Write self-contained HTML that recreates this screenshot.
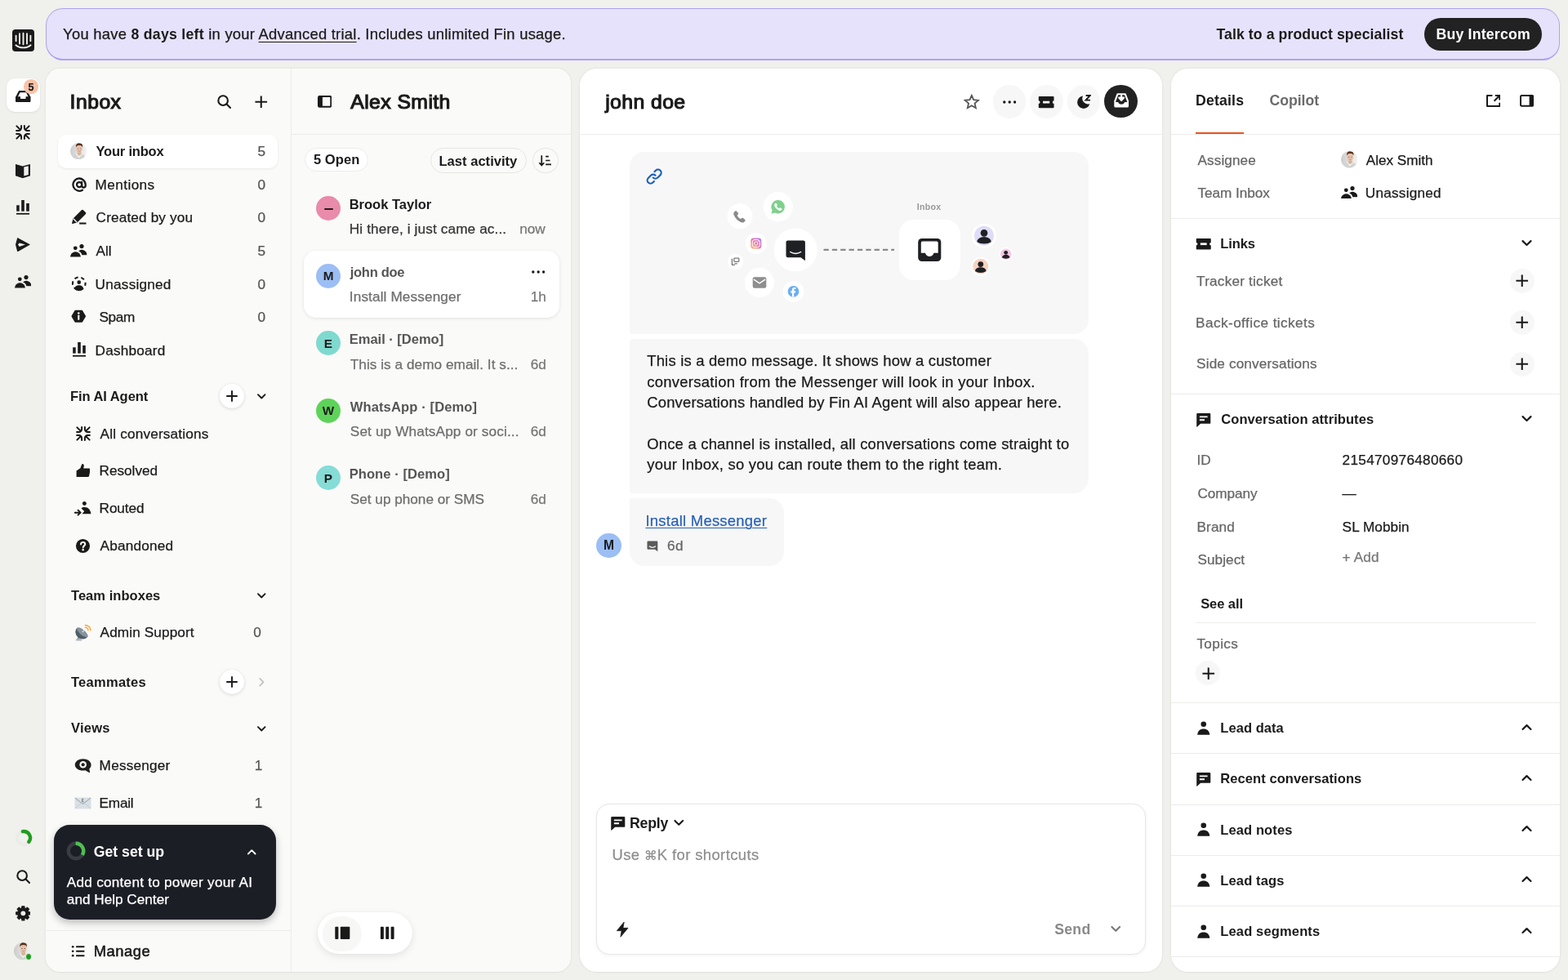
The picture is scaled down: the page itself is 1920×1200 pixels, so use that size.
<!DOCTYPE html>
<html lang="en">
<head>
<meta charset="utf-8">
<title>Inbox | Intercom</title>
<style>
html,body{margin:0;padding:0}
body{width:1920px;height:1200px;overflow:hidden;background:#f0f0ec;font-family:"Liberation Sans",sans-serif;position:relative;will-change:transform}
body>div,body>svg{position:absolute}
.t{white-space:nowrap;-webkit-text-stroke:.25px currentColor}
.t b{font-weight:700;font-size:17.700px;-webkit-text-stroke:0}
.t u{text-underline-offset:2.500px;text-decoration-thickness:1.200px}
</style>
</head>
<body>
<svg style="left:14.55px;top:35.7px;" width="27" height="27" viewBox="0 0 27 27"><rect x="0" y="0" width="27" height="27" rx="4" fill="#1a1a1a"/><path d="M4.6 7.6v6.6M9 5.3v12.2M13.5 4.8v13.4M18 5.3v12.2M22.4 7.6v6.6" stroke="#f0f0ec" stroke-width="1.9" stroke-linecap="round"/><path d="M4.4 19.3c2.4 2.1 5.6 3.1 9.1 3.1s6.7-1 9.1-3.1" fill="none" stroke="#f0f0ec" stroke-width="1.9" stroke-linecap="round"/></svg>
<div style="left:7.6px;top:96.3px;width:41px;height:41px;background:#fff;border-radius:10.5px;box-shadow:0 1px 3px rgba(0,0,0,.08)"></div>
<svg style="left:19px;top:110.55px;" width="18.5" height="14.2" viewBox="0 0 18.5 14.2"><path d="M0 7.2h6v2.7h6.5V7.2h6v5.5a1.5 1.5 0 0 1-1.5 1.5H1.5A1.5 1.5 0 0 1 0 12.7z" fill="#1a1a1a"/><path d="M1.2 8.2L4.7 1.2h9.1l3.5 7" fill="none" stroke="#1a1a1a" stroke-width="2.3" stroke-linejoin="round"/></svg>
<div style="left:29.4px;top:97.4px;width:17.2px;height:17.2px;background:#f9c3a8;border-radius:50%;"></div>
<div id="t1" class="t" style="left:34.5px;top:98px;font-size:12.5px;line-height:18px;font-weight:700;color:#1a1a1a;">5</div>
<svg style="left:19.05px;top:153.4px;" width="18" height="18" viewBox="0 0 18 18"><path d="M7.1 1.1V3.6A3.5 3.5 0 0 1 3.6 7.1H1.1M1.4 1.4L5.8 5.8M7.1 16.9V14.4A3.5 3.5 0 0 0 3.6 10.9H1.1M1.4 16.6L5.8 12.2M10.9 1.1V3.6A3.5 3.5 0 0 0 14.4 7.1H16.9M16.6 1.4L12.2 5.8M10.9 16.9V14.4A3.5 3.5 0 0 1 14.4 10.9H16.9M16.6 16.6L12.2 12.2" stroke="#1a1a1a" stroke-width="2" stroke-linecap="round" stroke-linejoin="round" fill="none"/></svg>
<svg style="left:19.05px;top:200.55px;" width="18" height="17.2" viewBox="0 0 18 17.2"><path d="M0 0l8.8 2.4 9.2-2.4v14.3l-9.2 2.9L0 14.3z" fill="#1a1a1a"/><path d="M10.3 3.6l5.5-1.4v10.7l-5.5 1.7z" fill="#f0f0ec"/></svg>
<svg style="left:20px;top:245px;" width="16" height="17.7" viewBox="0 0 16 17.7"><rect x=".2" y="6.3" width="3.5" height="7.4" fill="#1a1a1a"/><rect x="6.2" y="0" width="3.6" height="13.7" fill="#1a1a1a"/><rect x="12.2" y="4" width="3.6" height="9.7" fill="#1a1a1a"/><rect x="0" y="15.9" width="16" height="1.8" fill="#1a1a1a"/></svg>
<svg style="left:18.95px;top:290.75px;" width="18" height="17.6" viewBox="0 0 18 17.6"><path d="M2.3.100L18 8.6 2.3 17.5 0 8.6zM3 8.6l1.7 2.3 7.3-2.3-7.3-2.2z" fill="#1a1a1a" fill-rule="evenodd"/></svg>
<svg style="left:17.75px;top:337.3px;" width="20.5" height="15.6" viewBox="0 0 20.5 15.6"><circle cx="6.3" cy="4.8" r="2.4" fill="#1a1a1a"/><path d="M0 15.6a6.45 6.3 0 0 1 12.9 0z" fill="#1a1a1a"/><circle cx="14" cy="2.6" r="2.6" fill="#1a1a1a"/><path d="M14.4 13.2h6a6.2 6.2 0 0 0-10.3-4.7c2.3.8 3.9 2.5 4.3 4.7z" fill="#1a1a1a"/></svg>
<svg style="left:16.5px;top:1013.5px;" width="24" height="24" viewBox="0 0 24 24"><circle cx="12" cy="12" r="8" fill="none" stroke="#ebebe7" stroke-width="4"/><path d="M10.89 4.08A8 8 0 0 1 18.3 16.93" fill="none" stroke="#1f9d1f" stroke-width="4.3" stroke-linecap="round"/></svg>
<svg style="left:18.5px;top:1064.1px;" width="18.6" height="18.6" viewBox="0 0 16 16"><circle cx="7" cy="7" r="5" fill="none" stroke="#1a1a1a" stroke-width="1.8"/><path d="M10.8 10.8L14.6 14.6" stroke="#1a1a1a" stroke-width="1.8" stroke-linecap="round"/></svg>
<svg style="left:18.55px;top:1109.45px;" width="18.7" height="18.7" viewBox="0 0 16 16"><path d="M6.73 0.71L9.27 0.71L9.31 2.55L10.93 3.23L12.26 1.95L14.05 3.74L12.77 5.07L13.45 6.69L15.29 6.73L15.29 9.27L13.45 9.31L12.77 10.93L14.05 12.26L12.26 14.05L10.93 12.77L9.31 13.45L9.27 15.29L6.73 15.29L6.69 13.45L5.07 12.77L3.74 14.05L1.95 12.26L3.23 10.93L2.55 9.31L0.71 9.27L0.71 6.73L2.55 6.69L3.23 5.07L1.95 3.74L3.74 1.95L5.07 3.23L6.69 2.55z" fill="#1a1a1a" stroke="#1a1a1a" stroke-width="1.2" stroke-linejoin="round"/><circle cx="8" cy="8" r="2.5" fill="#f0f0ec"/></svg>
<svg style="left:17.4px;top:1153.7px" width="21.2" height="21.2" viewBox="0 0 21 21"><defs><clipPath id="avc1"><circle cx="10.5" cy="10.5" r="10.5"/></clipPath><linearGradient id="avg1" x1="0" y1="0" x2="1" y2="0"><stop offset="0" stop-color="#cbcbcb"/><stop offset=".55" stop-color="#e4e4e4"/><stop offset="1" stop-color="#f1f1f1"/></linearGradient><filter id="avf1" x="-20%" y="-20%" width="140%" height="140%"><feGaussianBlur stdDeviation=".45"/></filter></defs><circle cx="10.5" cy="10.5" r="10.5" fill="url(#avg1)"/><g clip-path="url(#avc1)"><g filter="url(#avf1)"><ellipse cx="10.6" cy="20.6" rx="9.8" ry="7.2" fill="#d2d3d3"/><path d="M7.6 13.8l3.6 4.2 3.4-3.8" fill="none" stroke="#efefe8" stroke-width="1.5"/><rect x="9.3" y="10.5" width="4.6" height="5" rx="1.6" fill="#d9b198"/><ellipse cx="11.5" cy="7.6" rx="4" ry="4.9" fill="#e6c2ac"/><path d="M7.3 5.6c-.5-3.6 1.4-5.3 4.3-5.3s4.7 1.7 4.1 5.3c-.9-2-2.2-2.6-4.2-2.6s-3.3.6-4.2 2.6z" fill="#5a321c"/><ellipse cx="9.9" cy="7.4" rx=".7" ry=".5" fill="#70483a"/><ellipse cx="13.1" cy="7.4" rx=".7" ry=".5" fill="#70483a"/><path d="M10 10.3c1 .6 2.1.6 3.1 0" fill="none" stroke="#b5826f" stroke-width=".7"/></g></g></svg>
<div style="left:30.7px;top:1167px;width:8.6px;height:8.6px;background:#1f9d1f;border-radius:50%;border:1.5px solid #f0f0ec;box-sizing:border-box"></div>
<div style="left:55.8px;top:9.7px;width:1854.3px;height:64.5px;background:#e7e2fb;border-radius:21px;border:solid #aca3ef;border-width:1.3px 1.6px 2px 1.6px;box-sizing:border-box"></div>
<div id="t2" class="t" style="left:77.1px;top:30px;font-size:18.4px;line-height:24px;font-weight:400;color:#1a1a1a;letter-spacing:0.254px;">You have <b>8 days left</b> in your <u>Advanced trial</u>. Includes unlimited Fin usage.</div>
<div id="t3" class="t" style="left:1489.4px;top:30px;font-size:17.7px;line-height:24px;font-weight:700;color:#1a1a1a;letter-spacing:0.081px;-webkit-text-stroke:0;">Talk to a product specialist</div>
<div style="left:1744px;top:21.7px;width:144.4px;height:40.6px;background:#222;border-radius:21px;"></div>
<div id="t4" class="t" style="left:1758.45px;top:30px;font-size:17.7px;line-height:24px;font-weight:700;color:#fff;letter-spacing:0.2px;-webkit-text-stroke:0;">Buy Intercom</div>
<div style="left:56.2px;top:84px;width:643.3px;height:1106px;background:#fafaf8;border-radius:17.5px;box-shadow:0 0 3px rgba(0,0,0,.09),0 1px 2px rgba(0,0,0,.03)"></div>
<div style="left:710.3px;top:84px;width:713.2px;height:1106px;background:#fff;border-radius:20.5px;box-shadow:0 0 3px rgba(0,0,0,.09),0 1px 2px rgba(0,0,0,.03)"></div>
<div style="left:1434px;top:84px;width:476px;height:1106px;background:#fff;border-radius:20.5px;box-shadow:0 0 3px rgba(0,0,0,.09),0 1px 2px rgba(0,0,0,.03);overflow:hidden"></div>
<div style="left:355.7px;top:84px;width:1px;height:1106px;background:#ececea"></div>
<div style="left:356px;top:164px;width:343.5px;height:1px;background:#ececea"></div>
<div id="t5" class="t" style="left:85.58px;top:109px;font-size:24.77px;line-height:32px;font-weight:400;color:#1a1a1a;letter-spacing:0.46px;-webkit-text-stroke:1.16px #1a1a1a;">Inbox</div>
<svg style="left:265px;top:115px;" width="18.6" height="18.6" viewBox="0 0 16 16"><circle cx="7" cy="7" r="5" fill="none" stroke="#1a1a1a" stroke-width="1.8"/><path d="M10.8 10.8L14.6 14.6" stroke="#1a1a1a" stroke-width="1.8" stroke-linecap="round"/></svg>
<svg style="left:310.25px;top:114.75px;" width="19.5" height="19.5" viewBox="0 0 16 16"><path d="M8 2v12M2 8h12" stroke="#1a1a1a" stroke-width="1.7" stroke-linecap="butt"/></svg>
<div style="left:70.8px;top:164.6px;width:269.6px;height:41.1px;background:#fff;border-radius:10px;box-shadow:0 1px 3px rgba(0,0,0,.08)"></div>
<svg style="left:86px;top:175.3px" width="20.2" height="20.2" viewBox="0 0 21 21"><defs><clipPath id="avc2"><circle cx="10.5" cy="10.5" r="10.5"/></clipPath><linearGradient id="avg2" x1="0" y1="0" x2="1" y2="0"><stop offset="0" stop-color="#cbcbcb"/><stop offset=".55" stop-color="#e4e4e4"/><stop offset="1" stop-color="#f1f1f1"/></linearGradient><filter id="avf2" x="-20%" y="-20%" width="140%" height="140%"><feGaussianBlur stdDeviation=".45"/></filter></defs><circle cx="10.5" cy="10.5" r="10.5" fill="url(#avg2)"/><g clip-path="url(#avc2)"><g filter="url(#avf2)"><ellipse cx="10.6" cy="20.6" rx="9.8" ry="7.2" fill="#d2d3d3"/><path d="M7.6 13.8l3.6 4.2 3.4-3.8" fill="none" stroke="#efefe8" stroke-width="1.5"/><rect x="9.3" y="10.5" width="4.6" height="5" rx="1.6" fill="#d9b198"/><ellipse cx="11.5" cy="7.6" rx="4" ry="4.9" fill="#e6c2ac"/><path d="M7.3 5.6c-.5-3.6 1.4-5.3 4.3-5.3s4.7 1.7 4.1 5.3c-.9-2-2.2-2.6-4.2-2.6s-3.3.6-4.2 2.6z" fill="#5a321c"/><ellipse cx="9.9" cy="7.4" rx=".7" ry=".5" fill="#70483a"/><ellipse cx="13.1" cy="7.4" rx=".7" ry=".5" fill="#70483a"/><path d="M10 10.3c1 .6 2.1.6 3.1 0" fill="none" stroke="#b5826f" stroke-width=".7"/></g></g></svg>
<div id="t6" class="t" style="left:117.5px;top:174px;font-size:16.55px;line-height:24px;font-weight:700;color:#1a1a1a;letter-spacing:-0.212px;-webkit-text-stroke:0;">Your inbox</div>
<div id="t7" class="t" style="left:315.5px;top:173px;font-size:17.2px;line-height:24px;font-weight:400;color:#555;">5</div>
<div id="t8" class="t" style="left:116.62px;top:214px;font-size:17.2px;line-height:24px;font-weight:400;color:#1a1a1a;letter-spacing:0.4px;">Mentions</div>
<div id="t9" class="t" style="left:315.5px;top:214px;font-size:17.2px;line-height:24px;font-weight:400;color:#555;">0</div>
<svg style="left:87.5px;top:217.2px;" width="18.2" height="18.2" viewBox="0 0 16 16"><circle cx="8" cy="8" r="2.7" fill="none" stroke="#1a1a1a" stroke-width="2"/><path d="M10.7 5.2v3.9a2 2 0 0 0 4 0V8A6.7 6.7 0 1 0 11.4 13.8" fill="none" stroke="#1a1a1a" stroke-width="2" stroke-linecap="round"/></svg>
<div id="t10" class="t" style="left:117.62px;top:254px;font-size:17.2px;line-height:24px;font-weight:400;color:#1a1a1a;letter-spacing:0.142px;">Created by you</div>
<div id="t11" class="t" style="left:315.5px;top:254px;font-size:17.2px;line-height:24px;font-weight:400;color:#555;">0</div>
<svg style="left:86.85px;top:256.35px;" width="19.5" height="19.5" viewBox="0 0 16 16"><path d="M.9 14.1l1.2-4.7L10.5 1a1.3 1.3 0 0 1 1.8 0l2.3 2.3a1.3 1.3 0 0 1 0 1.8L6.2 13.5l-4.7 1.2a.5.5 0 0 1-.6-.600z" fill="#1a1a1a"/><path d="M2.3 9.7l3.6 3.6" stroke="#fafaf8" stroke-width="1.1"/><path d="M8.3 14.4h6.9" stroke="#1a1a1a" stroke-width="1.7" stroke-linecap="butt"/></svg>
<div id="t12" class="t" style="left:117.62px;top:295px;font-size:17.2px;line-height:24px;font-weight:400;color:#1a1a1a;letter-spacing:-0.066px;">All</div>
<div id="t13" class="t" style="left:315.5px;top:295px;font-size:17.2px;line-height:24px;font-weight:400;color:#555;">5</div>
<svg style="left:86.35px;top:299px;" width="20.5" height="15.6" viewBox="0 0 20.5 15.6"><circle cx="6.3" cy="4.8" r="2.4" fill="#1a1a1a"/><path d="M0 15.6a6.45 6.3 0 0 1 12.9 0z" fill="#1a1a1a"/><circle cx="14" cy="2.6" r="2.6" fill="#1a1a1a"/><path d="M14.4 13.2h6a6.2 6.2 0 0 0-10.3-4.7c2.3.8 3.9 2.5 4.3 4.7z" fill="#1a1a1a"/></svg>
<div id="t14" class="t" style="left:116.62px;top:336px;font-size:17.2px;line-height:24px;font-weight:400;color:#1a1a1a;letter-spacing:0.226px;">Unassigned</div>
<div id="t15" class="t" style="left:315.5px;top:336px;font-size:17.2px;line-height:24px;font-weight:400;color:#555;">0</div>
<svg style="left:86.85px;top:338.15px;" width="19.5" height="19.5" viewBox="0 0 16 16"><circle cx="8" cy="7.6" r="6.4" fill="none" stroke="#1a1a1a" stroke-width="1.7" stroke-dasharray="3.6 3.1" stroke-dashoffset="1.4"/><circle cx="8" cy="6.3" r="1.9" fill="#1a1a1a"/><path d="M3.6 12.6c.3-2.2 2.1-3.4 4.4-3.4s4.1 1.2 4.4 3.4c-1 1.5-2.6 2.4-4.4 2.4s-3.4-.9-4.4-2.4z" fill="#1a1a1a"/></svg>
<div id="t16" class="t" style="left:121.42px;top:376px;font-size:17.2px;line-height:24px;font-weight:400;color:#1a1a1a;letter-spacing:-0.311px;">Spam</div>
<div id="t17" class="t" style="left:315.5px;top:376px;font-size:17.2px;line-height:24px;font-weight:400;color:#555;">0</div>
<svg style="left:87.35px;top:377.65px;" width="18.5" height="18.5" viewBox="0 0 16 16"><path d="M4.6 1.6h6.8a1 1 0 0 1 .87.5l3.2 5.4a1 1 0 0 1 0 1l-3.2 5.4a1 1 0 0 1-.87.5H4.6a1 1 0 0 1-.87-.5L.53 8.5a1 1 0 0 1 0-1l3.2-5.4a1 1 0 0 1 .87-.5z" fill="#1a1a1a"/><circle cx="8" cy="4.7" r="1.1" fill="#fafaf8"/><rect x="7.1" y="6.8" width="1.8" height="5" rx=".3" fill="#fafaf8"/></svg>
<div id="t18" class="t" style="left:116.62px;top:417px;font-size:17.2px;line-height:24px;font-weight:400;color:#1a1a1a;letter-spacing:0.203px;">Dashboard</div>
<svg style="left:88.6px;top:419.05px;" width="16" height="17.7" viewBox="0 0 16 17.7"><rect x=".2" y="6.3" width="3.5" height="7.4" fill="#1a1a1a"/><rect x="6.2" y="0" width="3.6" height="13.7" fill="#1a1a1a"/><rect x="12.2" y="4" width="3.6" height="9.7" fill="#1a1a1a"/><rect x="0" y="15.9" width="16" height="1.8" fill="#1a1a1a"/></svg>
<div id="t19" class="t" style="left:86px;top:474px;font-size:16.55px;line-height:24px;font-weight:700;color:#1a1a1a;letter-spacing:-0.076px;-webkit-text-stroke:0;">Fin AI Agent</div>
<div style="left:269.2px;top:469.9px;width:30px;height:30px;background:#fff;border-radius:50%;box-shadow:0 1px 4px rgba(0,0,0,.14)"></div>
<svg style="left:275.2px;top:475.9px;" width="18" height="18" viewBox="0 0 16 16"><path d="M8 2v12M2 8h12" stroke="#1a1a1a" stroke-width="1.7" stroke-linecap="butt"/></svg>
<svg style="left:311.75px;top:477.45px;" width="16.5" height="16.5" viewBox="0 0 16 16"><path d="M3.8 6l4.2 4.2L12.2 6" fill="none" stroke="#1a1a1a" stroke-width="1.8" stroke-linecap="round" stroke-linejoin="round"/></svg>
<div id="t20" class="t" style="left:122.62px;top:519px;font-size:17.2px;line-height:24px;font-weight:400;color:#1a1a1a;letter-spacing:0.176px;">All conversations</div>
<svg style="left:92.6px;top:522.1px;" width="18" height="18" viewBox="0 0 18 18"><path d="M7.1 1.1V3.6A3.5 3.5 0 0 1 3.6 7.1H1.1M1.4 1.4L5.8 5.8M7.1 16.9V14.4A3.5 3.5 0 0 0 3.6 10.9H1.1M1.4 16.6L5.8 12.2M10.9 1.1V3.6A3.5 3.5 0 0 0 14.4 7.1H16.9M16.6 1.4L12.2 5.8M10.9 16.9V14.4A3.5 3.5 0 0 1 14.4 10.9H16.9M16.6 16.6L12.2 12.2" stroke="#1a1a1a" stroke-width="2" stroke-linecap="round" stroke-linejoin="round" fill="none"/></svg>
<div id="t21" class="t" style="left:121.62px;top:564px;font-size:17.2px;line-height:24px;font-weight:400;color:#1a1a1a;letter-spacing:-0.035px;">Resolved</div>
<svg style="left:92.5px;top:567.85px;" width="17.8" height="16.3" viewBox="0 0 17.8 16.3"><path d="M.6 16.2V8.4L5.4 5.2 7.1.800c.3-.7 1.2-.9 1.9-.4.7.5 1 1.4.8 2.2L9.2 5.6h6.8c1 0 1.8.9 1.6 1.9l-1.5 7.2c-.2.9-.9 1.5-1.8 1.5z" fill="#1a1a1a"/></svg>
<div id="t22" class="t" style="left:121.62px;top:610px;font-size:17.2px;line-height:24px;font-weight:400;color:#1a1a1a;letter-spacing:-0.103px;">Routed</div>
<svg style="left:91.2px;top:613.95px;" width="20.6" height="17.7" viewBox="0 0 20.6 17.7"><circle cx="12.4" cy="2.6" r="2.5" fill="#1a1a1a"/><path d="M9.6 15.3h10.8c-.4-4.8-3.5-8.2-7.8-8.2-1.6 0-3 .5-4.1 1.3l3.7 3.7z" fill="#1a1a1a"/><path d="M.7 13.7h6.4M4.6 10.7l3 3-3 3" fill="none" stroke="#1a1a1a" stroke-width="1.9" stroke-linecap="round" stroke-linejoin="round"/></svg>
<div id="t23" class="t" style="left:122.62px;top:656px;font-size:17.2px;line-height:24px;font-weight:400;color:#1a1a1a;letter-spacing:0.197px;">Abandoned</div>
<svg style="left:92.1px;top:658.8px;" width="19" height="19" viewBox="0 0 16 16"><circle cx="8" cy="8" r="7.2" fill="#1a1a1a"/><path d="M5.9 6.3c0-1.3 1-2.1 2.2-2.1s2.2.8 2.2 2c0 1.7-2.1 1.7-2.1 3.4" fill="none" stroke="#fafaf8" stroke-width="1.7" stroke-linecap="round"/><circle cx="8.15" cy="11.9" r="1.05" fill="#fafaf8"/></svg>
<div id="t24" class="t" style="left:87px;top:718px;font-size:16.55px;line-height:24px;font-weight:700;color:#1a1a1a;letter-spacing:0.025px;-webkit-text-stroke:0;">Team inboxes</div>
<svg style="left:311.75px;top:721.15px;" width="16.5" height="16.5" viewBox="0 0 16 16"><path d="M3.8 6l4.2 4.2L12.2 6" fill="none" stroke="#1a1a1a" stroke-width="1.8" stroke-linecap="round" stroke-linejoin="round"/></svg>
<svg style="left:91.1px;top:764.1px;" width="21" height="21" viewBox="0 0 21 21"><path d="M2.6 19.6l2.8-5.2 3.4 3.2z" fill="#8b98a0"/><path d="M1.6 20.4h7.8l-1-2.2H2.6z" fill="#a9b4ba"/><g transform="rotate(40 9.8 10.2)"><path d="M1.2 10.2a8.6 8.2 0 0 0 17.2 0z" fill="#4f5d67"/><ellipse cx="9.8" cy="10.2" rx="8.6" ry="3.2" fill="#85939c"/><path d="M9.8 10.2v-4" stroke="#dfe5e8" stroke-width="1.1"/></g><path d="M13.4 1.4a6.4 6.4 0 0 1 6.4 6.4M13.4 4.3a3.5 3.5 0 0 1 3.5 3.5" fill="none" stroke="#f4a63e" stroke-width="1.5" stroke-linecap="round"/></svg>
<div id="t25" class="t" style="left:122.62px;top:762px;font-size:17.2px;line-height:24px;font-weight:400;color:#1a1a1a;letter-spacing:0.111px;">Admin Support</div>
<div id="t26" class="t" style="left:310.3px;top:762px;font-size:17.2px;line-height:24px;font-weight:400;color:#555;">0</div>
<div id="t27" class="t" style="left:87px;top:824px;font-size:16.55px;line-height:24px;font-weight:700;color:#1a1a1a;letter-spacing:0.244px;-webkit-text-stroke:0;">Teammates</div>
<div style="left:269.2px;top:820.4px;width:30px;height:30px;background:#fff;border-radius:50%;box-shadow:0 1px 4px rgba(0,0,0,.14)"></div>
<svg style="left:275.2px;top:826.4px;" width="18" height="18" viewBox="0 0 16 16"><path d="M8 2v12M2 8h12" stroke="#1a1a1a" stroke-width="1.7" stroke-linecap="butt"/></svg>
<svg style="left:311.75px;top:827.15px;" width="16.5" height="16.5" viewBox="0 0 16 16"><path d="M6 3.8l4.2 4.2L6 12.2" fill="none" stroke="#c4c4c0" stroke-width="1.8" stroke-linecap="round" stroke-linejoin="round"/></svg>
<div id="t28" class="t" style="left:87px;top:880px;font-size:16.55px;line-height:24px;font-weight:700;color:#1a1a1a;letter-spacing:0.207px;-webkit-text-stroke:0;">Views</div>
<svg style="left:311.75px;top:883.55px;" width="16.5" height="16.5" viewBox="0 0 16 16"><path d="M3.8 6l4.2 4.2L12.2 6" fill="none" stroke="#1a1a1a" stroke-width="1.8" stroke-linecap="round" stroke-linejoin="round"/></svg>
<svg style="left:90.8px;top:928.25px;" width="21.4" height="18.7" viewBox="0 0 21.44 18.72"><g transform="scale(1.34 1.17)"><path d="M8 1C3.8 1 .6 3.7.6 7.2c0 3.4 3.2 6.1 7.4 6.1.7 0 1.4-.1 2-.2l3.6 2.3c.4.2.8-.1.7-.5l-.6-3.4c1.1-1.1 1.7-2.6 1.7-4.3C15.4 3.7 12.2 1 8 1z" fill="#1f1f1f"/></g><circle cx="10.7" cy="8.3" r="4.3" fill="#fafaf8"/><circle cx="10.7" cy="8.3" r="2.1" fill="#1f1f1f"/></svg>
<div id="t29" class="t" style="left:121.62px;top:925px;font-size:17.2px;line-height:24px;font-weight:400;color:#1a1a1a;letter-spacing:0.206px;">Messenger</div>
<div id="t30" class="t" style="left:311.8px;top:925px;font-size:17.2px;line-height:24px;font-weight:400;color:#555;">1</div>
<svg style="left:91.1px;top:973.7px;" width="21" height="19" viewBox="0 0 21 19"><rect x=".5" y="2.5" width="20" height="14" rx="1.5" fill="#d9e1e6"/><path d="M.8 3l9.7 7.5L20.2 3" fill="none" stroke="#aab4bb" stroke-width="1.1"/><path d="M.8 16l7-6M20.2 16l-7-6" stroke="#c2cbd1" stroke-width="1"/><path d="M9.5 4.2h2.2M9.5 4.2v3.6M9.5 6h1.8M9.5 7.8h2.2" stroke="#6f7b84" stroke-width=".8" fill="none"/></svg>
<div id="t31" class="t" style="left:121.62px;top:971px;font-size:17.2px;line-height:24px;font-weight:400;color:#1a1a1a;letter-spacing:-0.227px;">Email</div>
<div id="t32" class="t" style="left:311.8px;top:971px;font-size:17.2px;line-height:24px;font-weight:400;color:#555;">1</div>
<div style="left:65.9px;top:1010.1px;width:272.2px;height:115.7px;background:#1c1e26;border-radius:19.5px;box-shadow:0 4px 10px rgba(0,0,0,.25)"></div>
<svg style="left:80.75px;top:1029.7px;" width="24" height="24" viewBox="0 0 24 24"><circle cx="12" cy="12" r="9.2" fill="none" stroke="#3a3c44" stroke-width="4.4"/><path d="M11.68 2.81A9.2 9.2 0 0 1 19.8 16.88" fill="none" stroke="#4fc04f" stroke-width="4.4" stroke-linecap="butt"/></svg>
<div id="t33" class="t" style="left:114.7px;top:1031px;font-size:17.7px;line-height:24px;font-weight:700;color:#fff;letter-spacing:-0.009px;-webkit-text-stroke:0;">Get set up</div>
<svg style="left:299.95px;top:1034.75px;" width="16.5" height="16.5" viewBox="0 0 16 16"><path d="M3.8 10.2L8 6l4.2 4.2" fill="none" stroke="#fff" stroke-width="1.8" stroke-linecap="round" stroke-linejoin="round"/></svg>
<div id="t34" class="t" style="left:81.83px;top:1068px;font-size:17.2px;line-height:24px;font-weight:400;color:#fff;letter-spacing:0.24px;">Add content to power your AI</div>
<div id="t35" class="t" style="left:81.83px;top:1089px;font-size:17.2px;line-height:24px;font-weight:400;color:#fff;letter-spacing:-0.006px;">and Help Center</div>
<div style="left:56.5px;top:1139px;width:299.2px;height:1px;background:#ececea"></div>
<svg style="left:87.45px;top:1156.25px;" width="17.5" height="17.5" viewBox="0 0 16 16"><circle cx="2" cy="3" r="1.25" fill="#1a1a1a"/><circle cx="2" cy="8" r="1.25" fill="#1a1a1a"/><circle cx="2" cy="13" r="1.25" fill="#1a1a1a"/><path d="M5.6 3H15M5.6 8H15M5.6 13H15" stroke="#1a1a1a" stroke-width="1.7"/></svg>
<div id="t36" class="t" style="left:114.78px;top:1153px;font-size:18.4px;line-height:24px;font-weight:400;color:#1a1a1a;letter-spacing:0.484px;-webkit-text-stroke:.55px #1a1a1a;">Manage</div>
<svg style="left:388.85px;top:117.1px;" width="17.3" height="14.8" viewBox="0 0 17.3 14.8"><rect x="1" y="1" width="15.3" height="12.8" rx="1.3" fill="none" stroke="#1a1a1a" stroke-width="2"/><path d="M5.9 1H2a1 1 0 0 0-1 1v10.8a1 1 0 0 0 1 1h3.9z" fill="#1a1a1a"/></svg>
<div id="t37" class="t" style="left:429.28px;top:109px;font-size:24.77px;line-height:32px;font-weight:400;color:#1a1a1a;letter-spacing:0.417px;-webkit-text-stroke:1.16px #1a1a1a;">Alex Smith</div>
<div style="left:372.7px;top:180.7px;width:78.5px;height:29.7px;background:#fff;border-radius:15px;border:1px solid #ececea;box-sizing:border-box"></div>
<div id="t38" class="t" style="left:383.9px;top:184px;font-size:16.55px;line-height:24px;font-weight:700;color:#1a1a1a;letter-spacing:0.073px;-webkit-text-stroke:0;">5 Open</div>
<div style="left:527.3px;top:180.7px;width:118.2px;height:31.8px;background:#fafaf8;border-radius:16px;border:1px solid #e6e6e3;box-sizing:border-box"></div>
<div id="t39" class="t" style="left:537.5px;top:186px;font-size:16.55px;line-height:24px;font-weight:700;color:#1a1a1a;letter-spacing:0.02px;-webkit-text-stroke:0;">Last activity</div>
<div style="left:652.2px;top:180.7px;width:31.5px;height:31.8px;background:#fafaf8;border-radius:50%;border:1px solid #e6e6e3;box-sizing:border-box"></div>
<svg style="left:659.4px;top:188.1px;" width="17" height="17" viewBox="0 0 16 16"><path d="M4 2v11.5M1.2 10.6L4 13.6l2.8-3" fill="none" stroke="#1a1a1a" stroke-width="1.6" stroke-linejoin="miter"/><path d="M8.6 3.5h3.4M8.6 8h5M8.6 12.5h6.4" stroke="#1a1a1a" stroke-width="1.6"/></svg>
<div style="left:387.3px;top:240px;width:30px;height:30px;background:#e98bab;border-radius:50%;"></div>
<div style="left:397.2px;top:254.8px;width:10.5px;height:2.2px;background:#2a1a1a;border-radius:1px;"></div>
<div id="t40" class="t" style="left:427.7px;top:239px;font-size:16.55px;line-height:24px;font-weight:700;color:#1a1a1a;letter-spacing:-0.018px;-webkit-text-stroke:0;">Brook Taylor</div>
<div id="t41" class="t" style="left:427.82px;top:268px;font-size:17.2px;line-height:24px;font-weight:400;color:#333;letter-spacing:0.123px;">Hi there, i just came ac...</div>
<div id="t42" class="t" style="left:636.26px;top:268px;font-size:17.2px;line-height:24px;font-weight:400;color:#777;">now</div>
<div style="left:372.3px;top:307.40000000000003px;width:312.4px;height:81.3px;background:#fff;border-radius:15px;box-shadow:0 1px 4px rgba(0,0,0,.10)"></div>
<div style="left:387.3px;top:322.6px;width:30px;height:30px;background:#9bbef4;border-radius:50%;"></div>
<div id="t43" class="t" style="left:395.8px;top:328px;font-size:15.3px;line-height:20px;font-weight:700;color:#1a1a1a;-webkit-text-stroke:0;">M</div>
<div id="t44" class="t" style="left:428.8px;top:322px;font-size:16.55px;line-height:24px;font-weight:700;color:#555;letter-spacing:-0.311px;-webkit-text-stroke:0;">john doe</div>
<div id="t45" class="t" style="left:427.82px;top:351px;font-size:17.2px;line-height:24px;font-weight:400;color:#6e6e6e;letter-spacing:0.117px;">Install Messenger</div>
<div id="t46" class="t" style="left:649.82px;top:351px;font-size:17.2px;line-height:24px;font-weight:400;color:#777;">1h</div>
<svg style="left:650.8px;top:330.6px;" width="16.4" height="4" viewBox="0 0 16.4 4"><circle cx="1.8" cy="2" r="1.7" fill="#1a1a1a"/><circle cx="8.2" cy="2" r="1.7" fill="#1a1a1a"/><circle cx="14.6" cy="2" r="1.7" fill="#1a1a1a"/></svg>
<div style="left:387.3px;top:405.1px;width:30px;height:30px;background:#7fd9cf;border-radius:50%;"></div>
<div id="t47" class="t" style="left:396.8px;top:411px;font-size:15.3px;line-height:20px;font-weight:700;color:#1a1a1a;-webkit-text-stroke:0;">E</div>
<div id="t48" class="t" style="left:427.7px;top:404px;font-size:16.55px;line-height:24px;font-weight:700;color:#555;letter-spacing:-0.018px;-webkit-text-stroke:0;">Email · [Demo]</div>
<div id="t49" class="t" style="left:428.82px;top:434px;font-size:17.2px;line-height:24px;font-weight:400;color:#6e6e6e;letter-spacing:0.04px;">This is a demo email. It s...</div>
<div id="t50" class="t" style="left:649.82px;top:434px;font-size:17.2px;line-height:24px;font-weight:400;color:#777;">6d</div>
<div style="left:387.3px;top:487.7px;width:30px;height:30px;background:#5ed35a;border-radius:50%;"></div>
<div id="t51" class="t" style="left:394.8px;top:493px;font-size:15.3px;line-height:20px;font-weight:700;color:#1a1a1a;-webkit-text-stroke:0;">W</div>
<div id="t52" class="t" style="left:428.7px;top:487px;font-size:16.55px;line-height:24px;font-weight:700;color:#555;letter-spacing:0.128px;-webkit-text-stroke:0;">WhatsApp · [Demo]</div>
<div id="t53" class="t" style="left:428.82px;top:516px;font-size:17.2px;line-height:24px;font-weight:400;color:#6e6e6e;letter-spacing:0.13px;">Set up WhatsApp or soci...</div>
<div id="t54" class="t" style="left:649.82px;top:516px;font-size:17.2px;line-height:24px;font-weight:400;color:#777;">6d</div>
<div style="left:387.3px;top:570.2px;width:30px;height:30px;background:#86dcd6;border-radius:50%;"></div>
<div id="t55" class="t" style="left:396.8px;top:576px;font-size:15.3px;line-height:20px;font-weight:700;color:#1a1a1a;-webkit-text-stroke:0;">P</div>
<div id="t56" class="t" style="left:427.7px;top:569px;font-size:16.55px;line-height:24px;font-weight:700;color:#555;letter-spacing:0.066px;-webkit-text-stroke:0;">Phone · [Demo]</div>
<div id="t57" class="t" style="left:428.82px;top:599px;font-size:17.2px;line-height:24px;font-weight:400;color:#6e6e6e;letter-spacing:-0.012px;">Set up phone or SMS</div>
<div id="t58" class="t" style="left:649.82px;top:599px;font-size:17.2px;line-height:24px;font-weight:400;color:#777;">6d</div>
<div style="left:389px;top:1117.2px;width:116px;height:51.3px;background:#fff;border-radius:26px;box-shadow:0 3px 10px rgba(0,0,0,.09),0 0 2px rgba(0,0,0,.05)"></div>
<div style="left:394.5px;top:1121.5px;width:48.8px;height:43.2px;background:#f7f7f5;border-radius:22px;"></div>
<svg style="left:408.65px;top:1132.35px;" width="20.5" height="20.5" viewBox="0 0 16 16"><rect x="1" y="2.2" width="3.2" height="11.8" rx=".7" fill="#1a1a1a"/><rect x="6.1" y="2.2" width="9" height="11.8" rx=".7" fill="#1a1a1a"/></svg>
<svg style="left:464.15px;top:1132.35px;" width="20.5" height="20.5" viewBox="0 0 16 16"><rect x="1.5" y="2.2" width="3.1" height="11.8" rx=".7" fill="#1a1a1a"/><rect x="6.45" y="2.2" width="3.1" height="11.8" rx=".7" fill="#1a1a1a"/><rect x="11.4" y="2.2" width="3.1" height="11.8" rx=".7" fill="#1a1a1a"/></svg>
<div id="t59" class="t" style="left:741.18px;top:109px;font-size:24.77px;line-height:32px;font-weight:400;color:#1a1a1a;letter-spacing:0.413px;-webkit-text-stroke:1.16px #1a1a1a;">john doe</div>
<div style="left:710.5px;top:164px;width:713px;height:1px;background:#ececea"></div>
<svg style="left:1180px;top:115px;" width="19.6" height="19.6" viewBox="0 0 16 16"><path d="M8 1.6l1.9 4.3 4.7.5-3.5 3.1 1 4.6L8 11.7l-4.1 2.4 1-4.6L1.4 6.4l4.7-.5z" fill="none" stroke="#555" stroke-width="1.5" stroke-linejoin="miter"/></svg>
<div style="left:1215.5px;top:104.2px;width:40.6px;height:40.6px;background:#f7f7f7;border-radius:50%;"></div>
<div style="left:1261.2px;top:104.2px;width:40.6px;height:40.6px;background:#f7f7f7;border-radius:50%;"></div>
<div style="left:1306.9px;top:104.2px;width:40.6px;height:40.6px;background:#f7f7f7;border-radius:50%;"></div>
<div style="left:1352.3px;top:103.8px;width:40.6px;height:40.6px;background:#222;border-radius:50%;"></div>
<svg style="left:1227.6px;top:122.5px;" width="16.4" height="4" viewBox="0 0 16.4 4"><circle cx="1.8" cy="2" r="1.7" fill="#1a1a1a"/><circle cx="8.2" cy="2" r="1.7" fill="#1a1a1a"/><circle cx="14.6" cy="2" r="1.7" fill="#1a1a1a"/></svg>
<svg style="left:1271.15px;top:114.85px;" width="20.3" height="20.3" viewBox="0 0 16 16"><path d="M.6 3.2a.8.8 0 0 1 .8-.8h13.2a.8.8 0 0 1 .8.8v3.4a1.4 1.4 0 0 0 0 2.8v3.4a.8.8 0 0 1-.8.8H1.4a.8.8 0 0 1-.8-.8V9.4a1.4 1.4 0 0 0 0-2.8z" fill="#1a1a1a"/><rect x="4.8" y="6.9" width="6.4" height="2.2" fill="#f7f7f7"/></svg>
<svg style="left:1318.5px;top:116.4px;" width="17" height="17" viewBox="0 0 17 17"><path d="M7.04 1.54A7.7 7.7 0 1 0 15.31 10.89A6.7 6.7 0 0 1 7.04 1.54z" fill="#1a1a1a"/><path d="M10.6 1h5.2l-5.2 5.6h5.4" fill="none" stroke="#1a1a1a" stroke-width="1.9" stroke-linejoin="miter"/></svg>
<svg style="left:1362.65px;top:113.35px;" width="20.3" height="20.3" viewBox="0 0 16 16"><path d="M1 9.4h3.9c.3 1.3 1.5 2.2 3.1 2.2s2.8-.9 3.1-2.2H15v4a1.2 1.2 0 0 1-1.2 1.2H2.2A1.2 1.2 0 0 1 1 13.4z" fill="#fff"/><path d="M1.5 9.4L4.3 1.8h7.4l2.8 7.6" fill="none" stroke="#fff" stroke-width="1.7" stroke-linejoin="round"/><path d="M8 2v5.5M5.6 5.2L8 7.9l2.4-2.7z" fill="#fff" stroke="#fff" stroke-width="1.6" stroke-linejoin="round"/></svg>
<div style="left:770.5px;top:186px;width:562px;height:222.8px;background:#f7f7f7;border-radius:18px 18px 18px 4px;"></div>
<svg style="left:791.05px;top:205.65px;" width="20.3" height="20.3" viewBox="0 0 16 16"><path d="M6.9 9.1a3.1 3.1 0 0 0 4.4 0l2.5-2.5a3.1 3.1 0 0 0-4.4-4.4L8.2 3.4" fill="none" stroke="#1b5fbe" stroke-width="1.7" stroke-linecap="round"/><path d="M9.1 6.9a3.1 3.1 0 0 0-4.4 0L2.2 9.4a3.1 3.1 0 0 0 4.4 4.4l1.2-1.2" fill="none" stroke="#1b5fbe" stroke-width="1.7" stroke-linecap="round"/></svg>
<div style="left:770.5px;top:414.8px;width:562px;height:189.7px;background:#f7f7f7;border-radius:4px 18px 18px 4px;"></div>
<div id="t60" class="t" style="left:792.23px;top:430px;font-size:18.4px;line-height:24px;font-weight:400;color:#1a1a1a;letter-spacing:0.212px;">This is a demo message. It shows how a customer</div>
<div id="t61" class="t" style="left:792.23px;top:456px;font-size:18.4px;line-height:24px;font-weight:400;color:#1a1a1a;letter-spacing:0.313px;">conversation from the Messenger will look in your Inbox.</div>
<div id="t62" class="t" style="left:792.23px;top:481px;font-size:18.4px;line-height:24px;font-weight:400;color:#1a1a1a;letter-spacing:0.2px;">Conversations handled by Fin AI Agent will also appear here.</div>
<div id="t63" class="t" style="left:792.23px;top:532px;font-size:18.4px;line-height:24px;font-weight:400;color:#1a1a1a;letter-spacing:0.226px;">Once a channel is installed, all conversations come straight to</div>
<div id="t64" class="t" style="left:792.23px;top:557px;font-size:18.4px;line-height:24px;font-weight:400;color:#1a1a1a;letter-spacing:0.264px;">your Inbox, so you can route them to the right team.</div>
<div style="left:770.5px;top:609.5px;width:189px;height:83.5px;background:#f7f7f7;border-radius:4px 18px 18px 18px;"></div>
<div id="t65" class="t" style="left:790.42px;top:626px;font-size:18.4px;line-height:24px;font-weight:400;color:#2a62b8;letter-spacing:0.278px;text-decoration:underline;text-underline-offset:1.8px;text-decoration-thickness:1.1px;">Install Messenger</div>
<svg style="left:790.9px;top:660.6px;" width="15.8" height="15.8" viewBox="0 0 16 16"><path d="M1.5 2.5a1 1 0 0 1 1-1h11a1 1 0 0 1 1 1V14.5L11 12H2.5a1 1 0 0 1-1-1z" fill="#5a5a5a"/><path d="M4.3 8.2c1.1.9 2.3 1.3 3.7 1.3s2.6-.4 3.7-1.3" fill="none" stroke="#f7f7f7" stroke-width="1.3" stroke-linecap="round"/></svg>
<div id="t66" class="t" style="left:817.12px;top:656px;font-size:17.2px;line-height:24px;font-weight:400;color:#666;letter-spacing:0.291px;">6d</div>
<div style="left:730.1px;top:652.6px;width:30.6px;height:30.6px;background:#9bbef4;border-radius:50%;"></div>
<div id="t67" class="t" style="left:738.9px;top:658px;font-size:15.6px;line-height:20px;font-weight:700;color:#1a1a1a;-webkit-text-stroke:0;">M</div>
<div style="left:730.3px;top:984.3px;width:672.5px;height:184.8px;background:#fff;border-radius:16px;border:1px solid #e6e6e4;box-sizing:border-box;box-shadow:0 1px 4px rgba(0,0,0,.06)"></div>
<svg style="left:747.05px;top:997.85px;" width="19.5" height="19.5" viewBox="0 0 16 16"><path d="M1 2.6a1 1 0 0 1 1-1h12a1 1 0 0 1 1 1v8.6a1 1 0 0 1-1 1H5L1.7 15.2a.4.4 0 0 1-.7-.3z" fill="#1a1a1a"/><path d="M4 5.2h8M4 8.4h5" stroke="#fff" stroke-width="1.5"/></svg>
<div id="t68" class="t" style="left:770.9px;top:996px;font-size:17.7px;line-height:24px;font-weight:700;color:#1a1a1a;letter-spacing:-0.182px;-webkit-text-stroke:0;">Reply</div>
<svg style="left:822.35px;top:998.35px;" width="18.5" height="18.5" viewBox="0 0 16 16"><path d="M3.8 6l4.2 4.2L12.2 6" fill="none" stroke="#1a1a1a" stroke-width="1.8" stroke-linecap="round" stroke-linejoin="round"/></svg>
<div id="t69" class="t" style="left:749.5px;top:1035px;font-size:18.4px;line-height:24px;font-weight:400;color:#8e8e8e;letter-spacing:0.406px;">Use <span style="font-family:'DejaVu Sans',sans-serif;font-size:15.5px">⌘</span>K for shortcuts</div>
<svg style="left:752.45px;top:1127.55px;" width="20.3" height="20.3" viewBox="0 0 16 16"><path d="M9.6.800L2.6 9.2h4.6l-1 6L13.4 6.6H8.6z" fill="#1a1a1a" stroke="#1a1a1a" stroke-width=".6" stroke-linejoin="round"/></svg>
<div id="t70" class="t" style="left:1291.3px;top:1126px;font-size:17.7px;line-height:24px;font-weight:700;color:#8a8a8a;letter-spacing:0.22px;-webkit-text-stroke:0;">Send</div>
<svg style="left:1357.05px;top:1127.75px;" width="18.5" height="18.5" viewBox="0 0 16 16"><path d="M3.8 6l4.2 4.2L12.2 6" fill="none" stroke="#777" stroke-width="1.8" stroke-linecap="round" stroke-linejoin="round"/></svg>
<div id="t71" class="t" style="left:1464px;top:111px;font-size:17.7px;line-height:24px;font-weight:700;color:#1a1a1a;letter-spacing:0.172px;-webkit-text-stroke:0;">Details</div>
<div id="t72" class="t" style="left:1554.4px;top:111px;font-size:17.7px;line-height:24px;font-weight:700;color:#6b6b6b;letter-spacing:-0.019px;-webkit-text-stroke:0;">Copilot</div>
<div style="left:1464.2px;top:161.8px;width:59px;height:2.6px;background:#e8551d;border-radius:0px;"></div>
<div style="left:1434px;top:164.2px;width:476px;height:1px;background:#ececea"></div>
<svg style="left:1820.05px;top:116.2px;" width="17.3" height="15" viewBox="0 0 17.3 15"><path d="M7.4 1H1v13h15.3V9.8" fill="none" stroke="#1a1a1a" stroke-width="2" stroke-linejoin="round" stroke-linecap="butt"/><path d="M10.8 1h5.5v5.5M16 1.3L9.6 7.7" fill="none" stroke="#1a1a1a" stroke-width="2" stroke-linejoin="miter" stroke-linecap="butt"/></svg>
<svg style="left:1860.65px;top:116.3px;" width="17.3" height="14.8" viewBox="0 0 17.3 14.8"><rect x="1" y="1" width="15.3" height="12.8" rx="1.3" fill="none" stroke="#1a1a1a" stroke-width="2"/><path d="M11.6 1h3.7a1 1 0 0 1 1 1v10.8a1 1 0 0 1-1 1h-3.7z" fill="#1a1a1a"/></svg>
<div id="t73" class="t" style="left:1466.53px;top:184px;font-size:17.2px;line-height:24px;font-weight:400;color:#666;letter-spacing:0.086px;">Assignee</div>
<div id="t74" class="t" style="left:1672.83px;top:184px;font-size:17.2px;line-height:24px;font-weight:400;color:#1a1a1a;letter-spacing:-0.037px;">Alex Smith</div>
<svg style="left:1641.6px;top:185.3px" width="20.6" height="20.6" viewBox="0 0 21 21"><defs><clipPath id="avc3"><circle cx="10.5" cy="10.5" r="10.5"/></clipPath><linearGradient id="avg3" x1="0" y1="0" x2="1" y2="0"><stop offset="0" stop-color="#cbcbcb"/><stop offset=".55" stop-color="#e4e4e4"/><stop offset="1" stop-color="#f1f1f1"/></linearGradient><filter id="avf3" x="-20%" y="-20%" width="140%" height="140%"><feGaussianBlur stdDeviation=".45"/></filter></defs><circle cx="10.5" cy="10.5" r="10.5" fill="url(#avg3)"/><g clip-path="url(#avc3)"><g filter="url(#avf3)"><ellipse cx="10.6" cy="20.6" rx="9.8" ry="7.2" fill="#d2d3d3"/><path d="M7.6 13.8l3.6 4.2 3.4-3.8" fill="none" stroke="#efefe8" stroke-width="1.5"/><rect x="9.3" y="10.5" width="4.6" height="5" rx="1.6" fill="#d9b198"/><ellipse cx="11.5" cy="7.6" rx="4" ry="4.9" fill="#e6c2ac"/><path d="M7.3 5.6c-.5-3.6 1.4-5.3 4.3-5.3s4.7 1.7 4.1 5.3c-.9-2-2.2-2.6-4.2-2.6s-3.3.6-4.2 2.6z" fill="#5a321c"/><ellipse cx="9.9" cy="7.4" rx=".7" ry=".5" fill="#70483a"/><ellipse cx="13.1" cy="7.4" rx=".7" ry=".5" fill="#70483a"/><path d="M10 10.3c1 .6 2.1.6 3.1 0" fill="none" stroke="#b5826f" stroke-width=".7"/></g></g></svg>
<div id="t75" class="t" style="left:1466.53px;top:224px;font-size:17.2px;line-height:24px;font-weight:400;color:#666;letter-spacing:-0.045px;">Team Inbox</div>
<div id="t76" class="t" style="left:1671.83px;top:224px;font-size:17.2px;line-height:24px;font-weight:400;color:#1a1a1a;letter-spacing:0.226px;">Unassigned</div>
<svg style="left:1641.75px;top:227.8px;" width="20.5" height="15.6" viewBox="0 0 20.5 15.6"><circle cx="6.3" cy="4.8" r="2.4" fill="#1a1a1a"/><path d="M0 15.6a6.45 6.3 0 0 1 12.9 0z" fill="#1a1a1a"/><circle cx="14" cy="2.6" r="2.6" fill="#1a1a1a"/><path d="M14.4 13.2h6a6.2 6.2 0 0 0-10.3-4.7c2.3.8 3.9 2.5 4.3 4.7z" fill="#1a1a1a"/></svg>
<div style="left:1434px;top:267.3px;width:476px;height:1px;background:#ececea"></div>
<svg style="left:1464.45px;top:288.75px;" width="19.5" height="19.5" viewBox="0 0 16 16"><path d="M.6 3.2a.8.8 0 0 1 .8-.8h13.2a.8.8 0 0 1 .8.8v3.4a1.4 1.4 0 0 0 0 2.8v3.4a.8.8 0 0 1-.8.8H1.4a.8.8 0 0 1-.8-.8V9.4a1.4 1.4 0 0 0 0-2.8z" fill="#1a1a1a"/><rect x="4.8" y="6.9" width="6.4" height="2.2" fill="#fff"/></svg>
<div id="t77" class="t" style="left:1494.3px;top:287px;font-size:16.55px;line-height:24px;font-weight:700;color:#1a1a1a;letter-spacing:-0.121px;-webkit-text-stroke:0;">Links</div>
<svg style="left:1859.6px;top:287.7px;" width="19" height="19" viewBox="0 0 16 16"><path d="M3.8 6l4.2 4.2L12.2 6" fill="none" stroke="#1a1a1a" stroke-width="1.8" stroke-linecap="round" stroke-linejoin="round"/></svg>
<div id="t78" class="t" style="left:1465.12px;top:332px;font-size:17.2px;line-height:24px;font-weight:400;color:#666;letter-spacing:0.202px;">Tracker ticket</div>
<div style="left:1849px;top:329px;width:30px;height:30px;background:#f7f7f7;border-radius:50%;"></div>
<svg style="left:1854.25px;top:334.25px;" width="19.5" height="19.5" viewBox="0 0 16 16"><path d="M8 2v12M2 8h12" stroke="#1a1a1a" stroke-width="1.7" stroke-linecap="butt"/></svg>
<div id="t79" class="t" style="left:1464.12px;top:383px;font-size:17.2px;line-height:24px;font-weight:400;color:#666;letter-spacing:0.42px;">Back-office tickets</div>
<div style="left:1849px;top:379.7px;width:30px;height:30px;background:#f7f7f7;border-radius:50%;"></div>
<svg style="left:1854.25px;top:384.95px;" width="19.5" height="19.5" viewBox="0 0 16 16"><path d="M8 2v12M2 8h12" stroke="#1a1a1a" stroke-width="1.7" stroke-linecap="butt"/></svg>
<div id="t80" class="t" style="left:1465.12px;top:433px;font-size:17.2px;line-height:24px;font-weight:400;color:#666;letter-spacing:0.131px;">Side conversations</div>
<div style="left:1849px;top:430.5px;width:30px;height:30px;background:#f7f7f7;border-radius:50%;"></div>
<svg style="left:1854.25px;top:435.75px;" width="19.5" height="19.5" viewBox="0 0 16 16"><path d="M8 2v12M2 8h12" stroke="#1a1a1a" stroke-width="1.7" stroke-linecap="butt"/></svg>
<div style="left:1434px;top:481.6px;width:476px;height:1px;background:#ececea"></div>
<svg style="left:1464.45px;top:503.55px;" width="19.5" height="19.5" viewBox="0 0 16 16"><path d="M1 2.6a1 1 0 0 1 1-1h12a1 1 0 0 1 1 1v8.6a1 1 0 0 1-1 1H5L1.7 15.2a.4.4 0 0 1-.7-.3z" fill="#1a1a1a"/><path d="M4 5.2h8M4 8.4h5" stroke="#fff" stroke-width="1.5"/></svg>
<div id="t81" class="t" style="left:1495.3px;top:502px;font-size:16.55px;line-height:24px;font-weight:700;color:#1a1a1a;letter-spacing:0.057px;-webkit-text-stroke:0;">Conversation attributes</div>
<svg style="left:1859.6px;top:502.5px;" width="19" height="19" viewBox="0 0 16 16"><path d="M3.8 6l4.2 4.2L12.2 6" fill="none" stroke="#1a1a1a" stroke-width="1.8" stroke-linecap="round" stroke-linejoin="round"/></svg>
<div id="t82" class="t" style="left:1465.53px;top:551px;font-size:17.2px;line-height:24px;font-weight:400;color:#666;">ID</div>
<div id="t83" class="t" style="left:1643.62px;top:551px;font-size:17.2px;line-height:24px;font-weight:400;color:#1a1a1a;letter-spacing:0.288px;">215470976480660</div>
<div id="t84" class="t" style="left:1466.53px;top:592px;font-size:17.2px;line-height:24px;font-weight:400;color:#666;letter-spacing:-0.086px;">Company</div>
<div id="t85" class="t" style="left:1643.62px;top:592px;font-size:17.2px;line-height:24px;font-weight:400;color:#1a1a1a;">—</div>
<div id="t86" class="t" style="left:1465.53px;top:633px;font-size:17.2px;line-height:24px;font-weight:400;color:#666;letter-spacing:0.111px;">Brand</div>
<div id="t87" class="t" style="left:1643.62px;top:633px;font-size:17.2px;line-height:24px;font-weight:400;color:#1a1a1a;letter-spacing:0.055px;">SL Mobbin</div>
<div id="t88" class="t" style="left:1466.53px;top:673px;font-size:17.2px;line-height:24px;font-weight:400;color:#666;letter-spacing:0.033px;">Subject</div>
<div id="t89" class="t" style="left:1643.62px;top:670px;font-size:17.2px;line-height:24px;font-weight:400;color:#777;letter-spacing:0.104px;">+ Add</div>
<div id="t90" class="t" style="left:1470.2px;top:728px;font-size:16.55px;line-height:24px;font-weight:700;color:#1a1a1a;letter-spacing:-0.099px;-webkit-text-stroke:0;">See all</div>
<div style="left:1464.2px;top:762.4px;width:416.5999999999999px;height:1px;background:#ececea"></div>
<div id="t91" class="t" style="left:1465.42px;top:776px;font-size:17.2px;line-height:24px;font-weight:400;color:#666;letter-spacing:0.346px;">Topics</div>
<div style="left:1464.4px;top:809.4px;width:30px;height:30px;background:#f7f7f7;border-radius:50%;"></div>
<svg style="left:1469.65px;top:814.65px;" width="19.5" height="19.5" viewBox="0 0 16 16"><path d="M8 2v12M2 8h12" stroke="#1a1a1a" stroke-width="1.7" stroke-linecap="butt"/></svg>
<div style="left:1434px;top:860.3px;width:476px;height:1px;background:#ececea"></div>
<svg style="left:1464.45px;top:881.65px;" width="19.5" height="19.5" viewBox="0 0 16 16"><circle cx="8" cy="3.9" r="2.7" fill="#1a1a1a"/><path d="M1.8 14.6c.2-3.9 2.8-6 6.2-6s6 2.1 6.2 6z" fill="#1a1a1a"/></svg>
<div id="t92" class="t" style="left:1494.3px;top:880px;font-size:16.55px;line-height:24px;font-weight:700;color:#1a1a1a;letter-spacing:0.041px;-webkit-text-stroke:0;">Lead data</div>
<svg style="left:1859.6px;top:880.6px;" width="19" height="19" viewBox="0 0 16 16"><path d="M3.8 10.2L8 6l4.2 4.2" fill="none" stroke="#1a1a1a" stroke-width="1.8" stroke-linecap="round" stroke-linejoin="round"/></svg>
<svg style="left:1464.45px;top:944.05px;" width="19.5" height="19.5" viewBox="0 0 16 16"><path d="M1 2.6a1 1 0 0 1 1-1h12a1 1 0 0 1 1 1v8.6a1 1 0 0 1-1 1H5L1.7 15.2a.4.4 0 0 1-.7-.3z" fill="#1a1a1a"/><path d="M4 5.2h8M4 8.4h5" stroke="#fff" stroke-width="1.5"/></svg>
<div id="t93" class="t" style="left:1494.3px;top:942px;font-size:16.55px;line-height:24px;font-weight:700;color:#1a1a1a;letter-spacing:0.063px;-webkit-text-stroke:0;">Recent conversations</div>
<svg style="left:1859.6px;top:943px;" width="19" height="19" viewBox="0 0 16 16"><path d="M3.8 10.2L8 6l4.2 4.2" fill="none" stroke="#1a1a1a" stroke-width="1.8" stroke-linecap="round" stroke-linejoin="round"/></svg>
<svg style="left:1464.45px;top:1006.15px;" width="19.5" height="19.5" viewBox="0 0 16 16"><circle cx="8" cy="3.9" r="2.7" fill="#1a1a1a"/><path d="M1.8 14.6c.2-3.9 2.8-6 6.2-6s6 2.1 6.2 6z" fill="#1a1a1a"/></svg>
<div id="t94" class="t" style="left:1494.3px;top:1005px;font-size:16.55px;line-height:24px;font-weight:700;color:#1a1a1a;letter-spacing:0.092px;-webkit-text-stroke:0;">Lead notes</div>
<svg style="left:1859.6px;top:1005.1px;" width="19" height="19" viewBox="0 0 16 16"><path d="M3.8 10.2L8 6l4.2 4.2" fill="none" stroke="#1a1a1a" stroke-width="1.8" stroke-linecap="round" stroke-linejoin="round"/></svg>
<svg style="left:1464.45px;top:1068.35px;" width="19.5" height="19.5" viewBox="0 0 16 16"><circle cx="8" cy="3.9" r="2.7" fill="#1a1a1a"/><path d="M1.8 14.6c.2-3.9 2.8-6 6.2-6s6 2.1 6.2 6z" fill="#1a1a1a"/></svg>
<div id="t95" class="t" style="left:1494.3px;top:1067px;font-size:16.55px;line-height:24px;font-weight:700;color:#1a1a1a;letter-spacing:0.128px;-webkit-text-stroke:0;">Lead tags</div>
<svg style="left:1859.6px;top:1067.3px;" width="19" height="19" viewBox="0 0 16 16"><path d="M3.8 10.2L8 6l4.2 4.2" fill="none" stroke="#1a1a1a" stroke-width="1.8" stroke-linecap="round" stroke-linejoin="round"/></svg>
<svg style="left:1464.45px;top:1130.75px;" width="19.5" height="19.5" viewBox="0 0 16 16"><circle cx="8" cy="3.9" r="2.7" fill="#1a1a1a"/><path d="M1.8 14.6c.2-3.9 2.8-6 6.2-6s6 2.1 6.2 6z" fill="#1a1a1a"/></svg>
<div id="t96" class="t" style="left:1494.3px;top:1129px;font-size:16.55px;line-height:24px;font-weight:700;color:#1a1a1a;letter-spacing:0.128px;-webkit-text-stroke:0;">Lead segments</div>
<svg style="left:1859.6px;top:1129.7px;" width="19" height="19" viewBox="0 0 16 16"><path d="M3.8 10.2L8 6l4.2 4.2" fill="none" stroke="#1a1a1a" stroke-width="1.8" stroke-linecap="round" stroke-linejoin="round"/></svg>
<div style="left:1434px;top:922.3px;width:476px;height:1px;background:#ececea"></div>
<div style="left:1434px;top:984.7px;width:476px;height:1px;background:#ececea"></div>
<div style="left:1434px;top:1046.9px;width:476px;height:1px;background:#ececea"></div>
<div style="left:1434px;top:1109px;width:476px;height:1px;background:#ececea"></div>
<div style="left:1434px;top:1171.1px;width:476px;height:1px;background:#ececea"></div>
<svg style="left:870px;top:220px" width="400" height="170" viewBox="870 220 400 170"><circle cx="906" cy="264.8" r="15.5" fill="#fff" /><circle cx="952.7" cy="253.3" r="18.2" fill="#fff" /><circle cx="925.8" cy="298.1" r="12.8" fill="#fff" /><circle cx="900.6" cy="320.4" r="9.6" fill="#fff" /><circle cx="974.2" cy="306" r="26.5" fill="#fff" /><circle cx="930" cy="346" r="18.2" fill="#fff" /><circle cx="971.5" cy="356.9" r="12.8" fill="#fff" /><g transform="translate(906 264.8) scale(.95)"><path d="M-6.2-6.6c.5-.5 1.3-.5 1.8 0l2.1 2.4c.4.5.4 1.1 0 1.6l-1.2 1.4c1 2.1 2.6 3.7 4.7 4.7l1.4-1.2c.5-.4 1.1-.4 1.6 0l2.4 2.1c.5.5.5 1.3 0 1.8l-1 1c-1 1-2.5 1.2-3.8.7C-2.7 6.2-6.2 2.7-7.9-1.8c-.5-1.3-.3-2.8.7-3.8z" fill="#8a8a8a"/></g><g transform="translate(952.7 253.3)"><path d="M0-8.4a8.3 8.3 0 0 0-7.1 12.6l-1.2 4.3 4.4-1.2A8.3 8.3 0 1 0 0-8.4z" fill="#7fd08d"/><path d="M-3.3-4.3c.4-.4 1-.4 1.3 0l1 1.5c.2.4.2.8-.1 1.1l-.6.7c.6 1.3 1.6 2.3 2.9 2.9l.7-.6c.3-.3.8-.3 1.1-.1l1.5 1c.4.3.5.9.1 1.3l-.6.6c-.6.6-1.5.8-2.3.5C-1.1 3.6-3.6 1.1-4.5-1.5c-.3-.8-.1-1.7.5-2.3z" fill="#fff"/></g><defs><linearGradient id="ig" x1="0" y1="1" x2="1" y2="0"><stop offset="0" stop-color="#fbc56b"/><stop offset=".45" stop-color="#f07aa0"/><stop offset="1" stop-color="#a57af0"/></linearGradient></defs><rect x="919.3" y="291.6" width="13" height="13" rx="3.4" fill="url(#ig)"/><rect x="921.3" y="293.6" width="9" height="9" rx="2.6" fill="none" stroke="#fff" stroke-width="1"/><circle cx="925.8" cy="298.1" r="2.2" fill="none" stroke="#fff" stroke-width="1"/><circle cx="928.7" cy="295.2" r=".6" fill="#fff"/><g transform="translate(900.6 320.4)" fill="none" stroke="#7a7a7a" stroke-width="1.3"><rect x="-1.8" y="-4.3" width="6" height="4.2" rx=".8"/><path d="M-4.2-3.6v7.6h3.6"/><path d="M-1.2 2.4h3.4" /></g><path d="M964.7 294.4h19a2.2 2.2 0 0 1 2.2 2.2v22.6l-5.4-3.9h-15.8a2.2 2.2 0 0 1-2.2-2.2v-16.5a2.2 2.2 0 0 1 2.2-2.2z" fill="#1f2024"/><path d="M967.8 308.5c1.9 1.3 4.1 1.9 6.4 1.9s4.5-.6 6.4-1.9" fill="none" stroke="#fff" stroke-width="1.5" stroke-linecap="round"/><rect x="921.7" y="339.2" width="16.6" height="13.6" rx="2" fill="#8e8e8e"/><path d="M923.3 342.3l6.7 4.5 6.7-4.5" fill="none" stroke="#fff" stroke-width="1.4" stroke-linecap="round" stroke-linejoin="round"/><circle cx="971.5" cy="356.9" r="6.8" fill="#6aaef6"/><path d="M972.2 363.6v-5.2h1.8l.3-2.1h-2.1v-1.2c0-.7.3-1.1 1.1-1.1h1v-1.9c-.4-.1-1-.1-1.6-.1-1.7 0-2.8 1-2.8 2.9v1.4h-1.7v2.1h1.7v5.2z" fill="#fff"/><path d="M1008.5 305.8H1095" stroke="#8a8a8a" stroke-width="2.3" stroke-dasharray="6.3 4.05" stroke-linecap="butt" fill="none"/><rect x="1100.8" y="269" width="75" height="74" rx="18" fill="#fff"/><rect x="1124.2" y="291.9" width="28.1" height="28.1" rx="4.6" fill="#1f2024"/><path d="M1127.8 297.2a1.8 1.8 0 0 1 1.8-1.8h17.3a1.8 1.8 0 0 1 1.8 1.8v12.6h-5.3c-.5 2.5-2.5 4.2-5.2 4.2s-4.7-1.7-5.2-4.2h-5.2z" fill="#fff"/><circle cx="1205" cy="288.7" r="15" fill="#fff" /><circle cx="1205" cy="288.7" r="12" fill="#dedcf6" /><circle cx="1205" cy="285.34" r="4.32" fill="#1f2024"/><path d="M1196.36 296.14a8.64 6.24 0 0 1 17.28 0a10.8 6 0 0 1 -17.28 0z" fill="#1f2024"/><circle cx="1200.8" cy="326.2" r="11.75" fill="#fff" /><circle cx="1200.8" cy="326.2" r="9.4" fill="#f9d3c0" /><circle cx="1200.8" cy="323.57" r="3.38" fill="#1f2024"/><path d="M1194.03 332.03a6.77 4.89 0 0 1 13.54 0a8.46 4.7 0 0 1 -13.54 0z" fill="#1f2024"/><circle cx="1231.7" cy="311.2" r="8.375" fill="#fff" /><circle cx="1231.7" cy="311.2" r="6.7" fill="#f6c8e2" /><circle cx="1231.7" cy="309.32" r="2.41" fill="#1f2024"/><path d="M1226.88 315.35a4.82 3.48 0 0 1 9.65 0a6.03 3.35 0 0 1 -9.65 0z" fill="#1f2024"/><text x="1137.7" y="257" text-anchor="middle" font-family="Liberation Sans, sans-serif" font-size="10.6" font-weight="700" fill="#999" letter-spacing=".3">Inbox</text></svg>
</body>
</html>
